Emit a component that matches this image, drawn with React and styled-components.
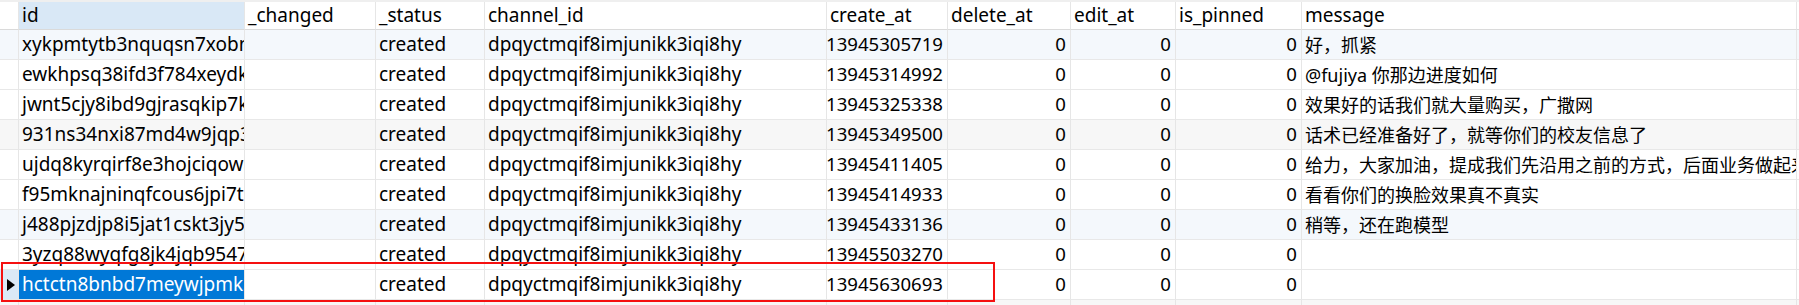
import React from 'react';
import styled, { createGlobalStyle } from 'styled-components';

const GlobalStyle = createGlobalStyle`
    html, body {
        margin: 0;
        padding: 0;
        background: #ffffff;
    }
    body {
        font-family: "Noto Sans", "Noto Sans CJK SC", sans-serif;
    }
`;

const COLUMNS = [
    { key: 'id', label: 'id', width: 226 },
    { key: 'changed', label: '_changed', width: 131 },
    { key: 'status', label: '_status', width: 109 },
    { key: 'channel', label: 'channel_id', width: 342 },
    { key: 'create', label: 'create_at', width: 121, numeric: true },
    { key: 'del', label: 'delete_at', width: 123, numeric: true },
    { key: 'edit', label: 'edit_at', width: 105, numeric: true },
    { key: 'pinned', label: 'is_pinned', width: 126, numeric: true },
    { key: 'message', label: 'message', width: 495, cjk: true },
];

const CHANNEL = 'dpqyctmqif8imjunikk3iqi8hy';

const rows = [
    { id: 'xykpmtytb3nquqsn7xobnz', create: '13945305719', message: '好，抓紧', tone: 'blue' },
    { id: 'ewkhpsq38ifd3f784xeydkq', create: '13945314992', message: '@fujiya 你那边进度如何' },
    { id: 'jwnt5cjy8ibd9gjrasqkip7kx', create: '13945325338', message: '效果好的话我们就大量购买，广撒网' },
    { id: '931ns34nxi87md4w9jqp3h', create: '13945349500', message: '话术已经准备好了，就等你们的校友信息了', tone: 'gray' },
    { id: 'ujdq8kyrqirf8e3hojciqowa', create: '13945411405', message: '给力，大家加油，提成我们先沿用之前的方式，后面业务做起来再说' },
    { id: 'f95mknajninqfcous6jpi7t9', create: '13945414933', message: '看看你们的换脸效果真不真实' },
    { id: 'j488pjzdjp8i5jat1cskt3jy5', create: '13945433136', message: '稍等，还在跑模型', tone: 'blue' },
    { id: '3yzq88wyqfg8jk4jqb9547r', create: '13945503270', message: '' },
    { id: 'hctctn8bnbd7meywjpmk3r', create: '13945630693', message: '', current: true },
];

const TEMPLATE = `19px ${COLUMNS.map((c) => c.width + 'px').join(' ')} 1fr`;

const Page = styled.div`
    position: relative;
    width: 1799px;
    height: 305px;
    overflow: hidden;
    background: #ffffff;
    border-top: 2px solid #efefef;
    box-sizing: border-box;
    color: #000000;
    font-size: 19px;
`;

const Row = styled.div`
    display: grid;
    grid-template-columns: ${TEMPLATE};
    height: ${(p) => (p.$header ? 28 : 30)}px;
    background: ${(p) => (p.$tone === 'blue' ? '#f4f8fc' : p.$tone === 'gray' ? '#f7f7f7' : '#ffffff')};
`;

const Cell = styled.div`
    box-sizing: border-box;
    display: flex;
    align-items: center;
    justify-content: ${(p) => (p.$numeric ? 'flex-end' : 'flex-start')};
    padding: ${(p) => (p.$numeric ? '0 4px 0 0' : '0 0 0 3px')};
    border-right: 1px solid #e6e6e6;
    border-bottom: 1px solid ${(p) => (p.$header ? '#dadada' : '#e8e8e8')};
    white-space: nowrap;
    overflow: hidden;
    line-height: 1;
    font-size: ${(p) => (p.$cjk ? '18px' : p.$numeric ? '18.6px' : '19px')};
    background: ${(p) => (p.$sorted ? '#d9e8f6' : 'transparent')};
`;

const SelectedText = styled.span`
    display: flex;
    align-items: center;
    align-self: stretch;
    margin: 0 0 0 -3px;
    padding-left: 3px;
    width: 100%;
    background: #0078d7;
    color: #ffffff;
`;

const Gutter = styled(Cell)`
    padding: 0 0 0 7px;
    background: ${(p) => (p.$current ? '#dbe9f6' : 'transparent')};
`;

const Pointer = styled.svg`
    width: 8px;
    height: 12px;
    display: block;
    flex-shrink: 0;
`;

const Highlight = styled.div`
    position: absolute;
    left: 1px;
    top: 260px;
    width: 994px;
    height: 40px;
    border: 2px solid #f51010;
    box-sizing: border-box;
    pointer-events: none;
`;

const cellValue = (row, col) => {
    switch (col.key) {
        case 'id': return row.id;
        case 'status': return 'created';
        case 'channel': return CHANNEL;
        case 'create': return row.create;
        case 'del':
        case 'edit':
        case 'pinned': return '0';
        case 'message': return row.message;
        default: return '';
    }
};

const App = () => (
    <Page>
        <GlobalStyle />
        <Row $header>
            <Cell $header />
            {COLUMNS.map((c) => (
                <Cell $header key={c.key} $sorted={c.key === 'id'}>{c.label}</Cell>
            ))}
            <Cell $header />
        </Row>

        {rows.map((row, i) => (
            <Row key={i} $tone={row.tone}>
                <Gutter $current={row.current}>
                    {row.current && (
                        <Pointer viewBox="0 0 8 12">
                            <path d="M0 0 L8 6 L0 12 Z" fill="#000" />
                        </Pointer>
                    )}
                </Gutter>
                {COLUMNS.map((c) => (
                    <Cell key={c.key} $numeric={c.numeric} $cjk={c.cjk}>
                        {row.current && c.key === 'id'
                            ? <SelectedText>{row.id}</SelectedText>
                            : cellValue(row, c)}
                    </Cell>
                ))}
                <Cell />
            </Row>
        ))}

        <Row $tone="gray">
            <Cell />
            {COLUMNS.map((c) => <Cell key={c.key} />)}
            <Cell />
        </Row>

        <Highlight />
    </Page>
);

export default App;
